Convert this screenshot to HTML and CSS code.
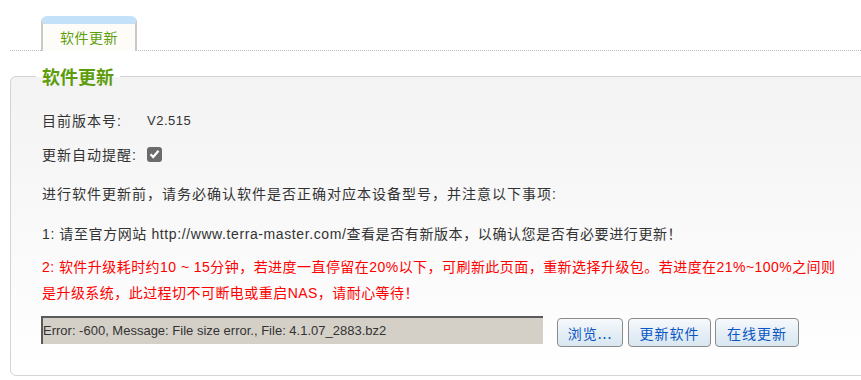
FILE: index.html
```html
<!DOCTYPE html>
<html lang="zh-CN">
<head>
    <meta charset="UTF-8">
    <title>软件更新</title>
    <link rel="stylesheet" href="styles.css">
</head>
<body>

    <div class="tabs">
        <div class="tab">软件更新</div>
    </div>

    <fieldset class="panel">
        <legend>软件更新</legend>
        <div class="content">
            <div class="row row-version">
                <span class="label">目前版本号:</span>
                <span class="value">V2.515</span>
            </div>
            <div class="row row-remind">
                <span class="label">更新自动提醒:</span>
                <span class="check">
                    <svg width="11" height="10" viewBox="0 0 11 10"><path d="M1.5 5.2 L4.2 8 L9.5 1.8" fill="none" stroke="#fff" stroke-width="2.2"/></svg>
                </span>
            </div>
            <div class="row row-intro">进行软件更新前，请务必确认软件是否正确对应本设备型号，并注意以下事项:</div>
            <div class="row row-note">1: 请至官方网站 http://www.terra-master.com/查看是否有新版本，以确认您是否有必要进行更新！</div>
            <div class="warn">2: 软件升级耗时约10 ~ 15分钟，若进度一直停留在20%以下，可刷新此页面，重新选择升级包。若进度在21%~100%之间则<br>是升级系统，此过程切不可断电或重启NAS，请耐心等待！</div>
            <div class="actions">
                <div class="file-box">Error: -600, Message: File size error., File: 4.1.07_2883.bz2</div>
                <button class="btn btn-browse">浏览...</button>
                <button class="btn btn-update">更新软件</button>
                <button class="btn btn-online">在线更新</button>
            </div>
        </div>
    </fieldset>

</body>
</html>
```

FILE: styles.css
```css
body {
    margin: 0;
    font-family: "Liberation Sans", "Noto Sans CJK SC", sans-serif;
    font-size: 14px;
    color: #333;
    background: #fff;
    overflow: hidden;
}
/* Tab strip */
.tabs {
    margin: 14px 0 0 10px;
    padding-left: 31px;
    border-bottom: 1px dotted #bdbdbd;
    height: 36px;
    display: flex;
    align-items: flex-end;
}
.tab {
    width: 92px;
    height: 27px;
    margin-bottom: -1px;
    background: #fdfcf9;
    border: 2px solid #c9c9c9;
    border-top: 8px solid #c3e1f9;
    border-bottom: none;
    border-radius: 6px 6px 0 0;
    color: #5f9f0c;
    font-family: "Noto Sans CJK SC", sans-serif;
    font-size: 14px;
    letter-spacing: 0.5px;
    text-align: center;
    line-height: 26px;
}
/* Panel */
.panel {
    margin: 15px 0 0 10px;
    width: 880px;
    height: 308px;
    padding: 0;
    border: 1px solid #d4d4d4;
    border-radius: 6px;
    background: linear-gradient(#f3f3f3, #fff);
    box-sizing: content-box;
}
.panel legend {
    margin-left: 25px;
    padding: 0 6px;
    font-family: "Noto Sans CJK SC", sans-serif;
    font-size: 18px;
    font-weight: bold;
    line-height: 20px;
    color: #5d9c0a;
}
.content {
    padding-left: 31px;
}
.row {
    height: 20px;
    line-height: 20px;
    display: flex;
    align-items: center;
    letter-spacing: 1px;
}
.label {
    width: 105px;
}
.value {
    font-size: 13px;
    letter-spacing: 0.5px;
}
.row-version {
    margin-top: 25px;
}
.row-remind {
    margin-top: 14px;
}
.check {
    width: 15px;
    height: 15px;
    border-radius: 3px;
    background: #6b6b6b;
    display: flex;
    align-items: center;
    justify-content: center;
    margin-top: -2px;
}
.row-intro {
    margin-top: 19px;
}
.row-note {
    margin-top: 20px;
    letter-spacing: 0.6px;
}
.warn {
    margin-top: 10px;
    line-height: 26px;
    color: #ff0000;
    letter-spacing: 0.45px;
    white-space: nowrap;
}
/* File + buttons */
.actions {
    margin: 10px 0 0 -1px;
    display: flex;
    align-items: flex-start;
}
.file-box {
    width: 500px;
    height: 26px;
    line-height: 26px;
    background: #d4d0c8;
    border-top: 2px solid #5a5a5a;
    border-left: 2px solid #5a5a5a;
    font-size: 13px;
    color: #333;
    white-space: nowrap;
    overflow: hidden;
    margin-right: 14px;
}
.btn {
    height: 29px;
    margin-top: 2px;
    padding: 0;
    border: 1px solid #8b8b8b;
    border-radius: 4px;
    background: linear-gradient(#f6f9fc, #e3edf5 60%, #d9e7f0);
    color: #0a56c4;
    font-family: "Noto Sans CJK SC", sans-serif;
    font-size: 14px;
    letter-spacing: 1px;
    cursor: pointer;
}
.btn-browse {
    width: 66px;
    margin-right: 5px;
}
.btn-update {
    width: 83px;
    margin-right: 4px;
}
.btn-online {
    width: 84px;
}
```
